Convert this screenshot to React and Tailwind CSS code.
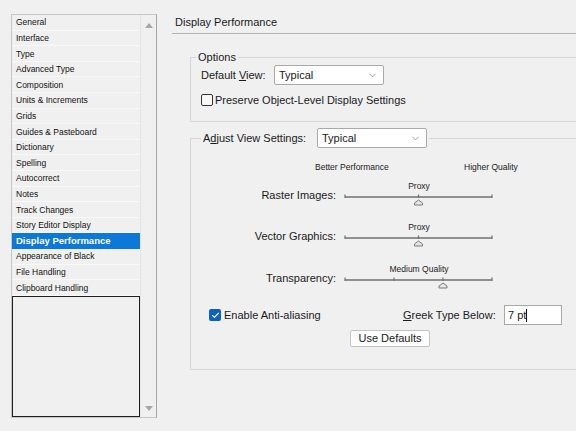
import React from "react";
import { ChevronDown, Check } from "lucide-react";

const items = [
  "General",
  "Interface",
  "Type",
  "Advanced Type",
  "Composition",
  "Units & Increments",
  "Grids",
  "Guides & Pasteboard",
  "Dictionary",
  "Spelling",
  "Autocorrect",
  "Notes",
  "Track Changes",
  "Story Editor Display",
  "Display Performance",
  "Appearance of Black",
  "File Handling",
  "Clipboard Handling",
];

function Slider({ value, ticks, thumb }) {
  const x = (t) => 1 + t * 147;
  const tx = x(thumb);
  return (
    <div className="flex flex-col w-[150px]">
      <div className="h-[12px] text-center text-[8.5px] leading-[12px] text-[#222]">{value}</div>
      <svg width="150" height="16" className="block">
        <line x1="1" y1="5" x2="148" y2="5" stroke="#707070" strokeWidth="1.6" />
        {ticks.map((t) => (
          <line key={t} x1={x(t)} y1="2.5" x2={x(t)} y2="6" stroke="#707070" strokeWidth="1.2" />
        ))}
        <polygon
          points={`${tx},8 ${tx + 4},11 ${tx + 4},13 ${tx - 4},13 ${tx - 4},11`}
          fill="#e6e6e6"
          stroke="#7a7a7a"
          strokeWidth="1"
        />
      </svg>
    </div>
  );
}

function SliderRow({ label, value, ticks, thumb, className }) {
  return (
    <div className={"flex items-start " + className}>
      <div className="w-[145px] text-right pt-[7px] leading-[16px]">{label}</div>
      <div className="ml-[8px]">
        <Slider value={value} ticks={ticks} thumb={thumb} />
      </div>
    </div>
  );
}

function Select({ value, className }) {
  return (
    <div
      className={
        "h-[20px] bg-white border border-[#a9a9a9] rounded-[2px] flex items-center justify-between pl-[4px] pr-[5px] " +
        className
      }
    >
      <span className="leading-[16px]">{value}</span>
      <ChevronDown size={11} strokeWidth={1.5} color="#777" />
    </div>
  );
}

export default function App() {
  return (
    <div className="w-[576px] h-[431px] bg-[#f0f0f0] flex overflow-hidden font-['Liberation_Sans',Arial,sans-serif] text-[#1a1a1a]">
      {/* Left list */}
      <div className="w-[172px] shrink-0 pl-[11px] pt-[14px]">
        <div className="w-[146px] h-[404px] flex border border-[#c6c6c6] border-r-[#a6a6a6]">
          <div className="w-[128px] flex flex-col">
            {items.map((it) => {
              const sel = it === "Display Performance";
              return (
                <div
                  key={it}
                  className={
                    "h-[15.6px] shrink-0 pl-[4px] pt-[1px] flex items-center whitespace-nowrap " +
                    (sel
                      ? "bg-[#0c78d8] text-white font-bold text-[9.5px]"
                      : "text-[8.5px] text-[#111] border-b border-[#f9f9f9]")
                  }
                >
                  {it}
                </div>
              );
            })}
            <div className="flex-1 border border-[#1e1e1e]" />
          </div>
          <div className="w-[16px] flex flex-col items-center justify-between pt-[8px] pb-[6px] border-l border-[#e4e4e4]">
            <svg width="8" height="5">
              <polygon points="4,0 8,5 0,5" fill="#a6a6a6" />
            </svg>
            <svg width="8" height="5">
              <polygon points="0,0 8,0 4,5" fill="#a6a6a6" />
            </svg>
          </div>
        </div>
      </div>

      {/* Right panel */}
      <div className="flex-1 overflow-hidden text-[11px]">
        <div className="h-[34px] pt-[14px] pl-[3px] border-b border-[#b3b3b3] leading-[16px] whitespace-nowrap">
          Display Performance
        </div>

        {/* Options */}
        <fieldset className="mt-[15px] ml-[18px] w-[420px] border border-[#d6d6d6]">
          <legend className="ml-[5px] px-[2px] leading-[16px]">Options</legend>
          <div className="pl-[10px] pb-[13px]">
            <div className="h-[20px] flex items-center">
              <span className="w-[73px] whitespace-nowrap">
                Default <span className="underline">V</span>iew:
              </span>
              <Select value="Typical" className="w-[110px]" />
            </div>
            <div className="mt-[7px] h-[16px] flex items-center gap-[2px]">
              <div className="w-[12px] h-[12px] border border-[#333] rounded-[2px] bg-[#f7f7f7]" />
              <span className="whitespace-nowrap">Preserve Object-Level Display Settings</span>
            </div>
          </div>
        </fieldset>

        {/* Adjust View Settings */}
        <fieldset className="mt-[6px] ml-[18px] w-[420px] border border-[#d6d6d6]">
          <legend className="ml-[10px] px-[2px]">
            <div className="flex items-center h-[20px]">
              <span className="w-[114px] whitespace-nowrap">
                A<span className="underline">d</span>just View Settings:
              </span>
              <Select value="Typical" className="w-[110px]" />
            </div>
          </legend>
          <div className="pb-[22px]">
            <div className="mt-[13px] h-[12px] flex text-[8.5px] leading-[12px] ml-[124px] whitespace-nowrap">
              <span className="w-[149px]">Better Performance</span>
              <span>Higher Quality</span>
            </div>
            <SliderRow className="mt-[7px]" label="Raster Images:" value="Proxy" ticks={[0, 0.5, 1]} thumb={0.5} />
            <SliderRow className="mt-[13px]" label="Vector Graphics:" value="Proxy" ticks={[0, 0.5, 1]} thumb={0.5} />
            <SliderRow
              className="mt-[14px]"
              label="Transparency:"
              value="Medium Quality"
              ticks={[0, 1 / 3, 2 / 3, 1]}
              thumb={2 / 3}
            />

            <div className="mt-[14px] h-[20px] flex items-center pl-[18px]">
              <div className="w-[194px] flex items-center gap-[3px]">
                <div className="w-[12px] h-[12px] rounded-[2px] bg-[#0b62c4] flex items-center justify-center">
                  <Check size={9} strokeWidth={3} color="white" />
                </div>
                <span className="whitespace-nowrap">Enable Anti-aliasing</span>
              </div>
              <span className="whitespace-nowrap w-[101px]">
                <span className="underline">G</span>reek Type Below:
              </span>
              <div className="w-[58px] h-[20px] bg-white border border-[#a9a9a9] flex items-center pl-[3px]">
                <span className="leading-[16px]">7 pt</span>
                <span className="w-px h-[13px] bg-[#111]" />
              </div>
            </div>
            <div className="mt-[5px] pl-[159px]">
              <div className="w-[80px] h-[17px] bg-[#fdfdfd] border border-[#c4c4c4] rounded-[2px] flex items-center justify-center leading-[15px]">
                Use Defaults
              </div>
            </div>
          </div>
        </fieldset>
      </div>
    </div>
  );
}
